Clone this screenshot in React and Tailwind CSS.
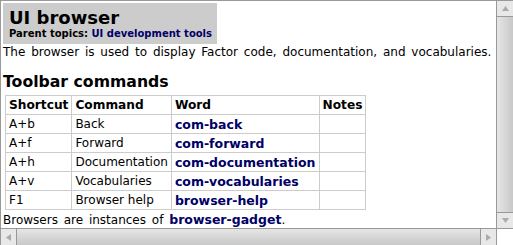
import React from 'react'

const rows = [
  ['A+b', 'Back', 'com-back'],
  ['A+f', 'Forward', 'com-forward'],
  ['A+h', 'Documentation', 'com-documentation'],
  ['A+v', 'Vocabularies', 'com-vocabularies'],
  ['F1', 'Browser help', 'browser-help'],
]

const UpArrow = () => (
  <svg width="7" height="5" viewBox="0 0 7 5"><path d="M3.5 0 L7 5 L0 5 Z" fill="#aaa" /></svg>
)
const DownArrow = () => (
  <svg width="7" height="5" viewBox="0 0 7 5"><path d="M0 0 L7 0 L3.5 5 Z" fill="#aaa" /></svg>
)
const LeftArrow = () => (
  <svg width="5" height="7" viewBox="0 0 5 7"><path d="M5 0 L5 7 L0 3.5 Z" fill="#aaa" /></svg>
)
const RightArrow = () => (
  <svg width="5" height="7" viewBox="0 0 5 7"><path d="M0 0 L5 3.5 L0 7 Z" fill="#aaa" /></svg>
)

export default function App() {
  return (
    <div className="w-[513px] h-[245px] bg-white flex flex-col overflow-hidden border-l border-t border-[#999] font-['DejaVu_Sans',sans-serif] text-black">
      <div className="flex flex-1 min-h-0">
        {/* Document */}
        <div className="flex-1 min-w-0 pl-[2px] pt-[2px] text-[12px] leading-[15px]">
          <div className="inline-block bg-[#cccccc] pl-[6px] pr-[5px] pt-[4px] pb-[4px]">
            <div className="text-[18px] leading-[21px] font-bold">UI browser</div>
            <div className="text-[10px] leading-[12px] font-bold">
              Parent topics: <span className="text-[#000066]">UI development tools</span>
            </div>
          </div>
          <p className="mt-[1px] whitespace-nowrap [word-spacing:2px]">The browser is used to display Factor code, documentation, and vocabularies.</p>
          <h2 className="text-[15.7px] leading-[19px] font-bold mt-[12px]">Toolbar commands</h2>
          <table className="border-collapse mt-[4px] ml-[2px]">
            <thead>
              <tr className="h-[19px] text-[12.2px]">
                <th className="border border-[#cccccc] px-[3px] text-left font-bold">Shortcut</th>
                <th className="border border-[#cccccc] px-[3px] text-left font-bold">Command</th>
                <th className="border border-[#cccccc] px-[3px] text-left font-bold">Word</th>
                <th className="border border-[#cccccc] px-[3px] text-left font-bold">Notes</th>
              </tr>
            </thead>
            <tbody>
              {rows.map(r => (
                <tr key={r[0]} className="h-[19px]">
                  <td className="border border-[#cccccc] px-[3px]">{r[0]}</td>
                  <td className="border border-[#cccccc] px-[3px]">{r[1]}</td>
                  <td className="border border-[#cccccc] px-[3px] text-[12.5px] font-bold text-[#000066]">{r[2]}</td>
                  <td className="border border-[#cccccc] px-[3px]"></td>
                </tr>
              ))}
            </tbody>
          </table>
          <p className="mt-[2px] whitespace-nowrap [word-spacing:2px]">
            Browsers are instances of <span className="text-[12.5px] font-bold text-[#000066] [word-spacing:0]">browser-gadget</span>.
          </p>
        </div>
        {/* Vertical scrollbar */}
        <div className="w-[17px] flex flex-col border-l border-[#999] bg-[#d4d4d4]">
          <div className="h-[16px] flex items-center justify-center bg-[#e8e8e8] border-b border-[#999]"><UpArrow /></div>
          <div className="flex-1 bg-gradient-to-r from-[#e6e6e6] to-[#c8c8c8]"></div>
          <div className="h-[16px] flex items-center justify-center bg-[#e8e8e8] border-t border-[#999]"><DownArrow /></div>
        </div>
      </div>
      {/* Horizontal scrollbar */}
      <div className="h-[17px] flex border-t border-[#999]">
        <div className="w-[16px] flex items-center justify-center bg-[#e8e8e8] border-r border-[#999]"><LeftArrow /></div>
        <div className="flex-1 bg-gradient-to-b from-[#e6e6e6] to-[#c8c8c8]"></div>
        <div className="w-[16px] flex items-center justify-center bg-[#e8e8e8] border-l border-[#999]"><RightArrow /></div>
        <div className="w-[17px] bg-white border-l border-[#999]"></div>
      </div>
    </div>
  )
}
